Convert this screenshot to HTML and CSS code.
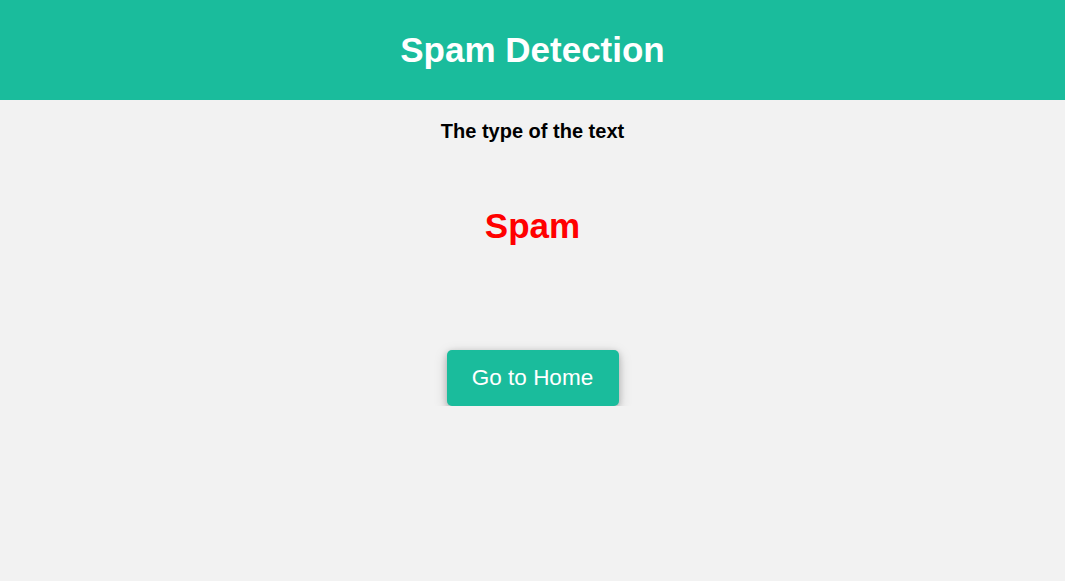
FILE: index.html
```html
<!DOCTYPE html>
<html>
<head>
<meta charset="utf-8">
<link rel="stylesheet" href="styles.css">
</head>
<body>
<header class="header"><h1 class="title">Spam Detection</h1></header>
<main class="main">
  <h3 class="sub">The type of the text</h3>
  <div class="result">Spam</div>
  <a class="btn" href="#">Go to Home</a>
</main>
</body>
</html>
```
FILE: styles.css
```css
html, body { margin: 0; padding: 0; }
body {
  background: #f2f2f2;
  font-family: "Liberation Sans", Arial, sans-serif;
  color: #000;
}
.header {
  height: 100px;
  background: #1abc9c;
  display: flex;
  align-items: center;
  justify-content: center;
}
.title {
  margin: 0;
  color: #fff;
  font-size: 35px;
  line-height: 40px;
  font-weight: bold;
}
.main {
  display: flex;
  flex-direction: column;
  align-items: center;
}
.sub {
  margin: 20px 0 0;
  font-size: 20px;
  line-height: 23px;
  font-weight: bold;
}
.result {
  margin-top: 63px;
  font-size: 35px;
  line-height: 40px;
  font-weight: bold;
  color: #ff0000;
}
.btn {
  margin-top: 104px;
  display: block;
  width: 172px;
  height: 56px;
  box-sizing: border-box;
  line-height: 56px;
  text-align: center;
  background: #1abc9c;
  color: #fff;
  font-size: 22.5px;
  text-decoration: none;
  border-radius: 5px;
  box-shadow: 0 2px 6px rgba(0,0,0,0.2), 0 4px 14px rgba(0,0,0,0.18);
}
```
